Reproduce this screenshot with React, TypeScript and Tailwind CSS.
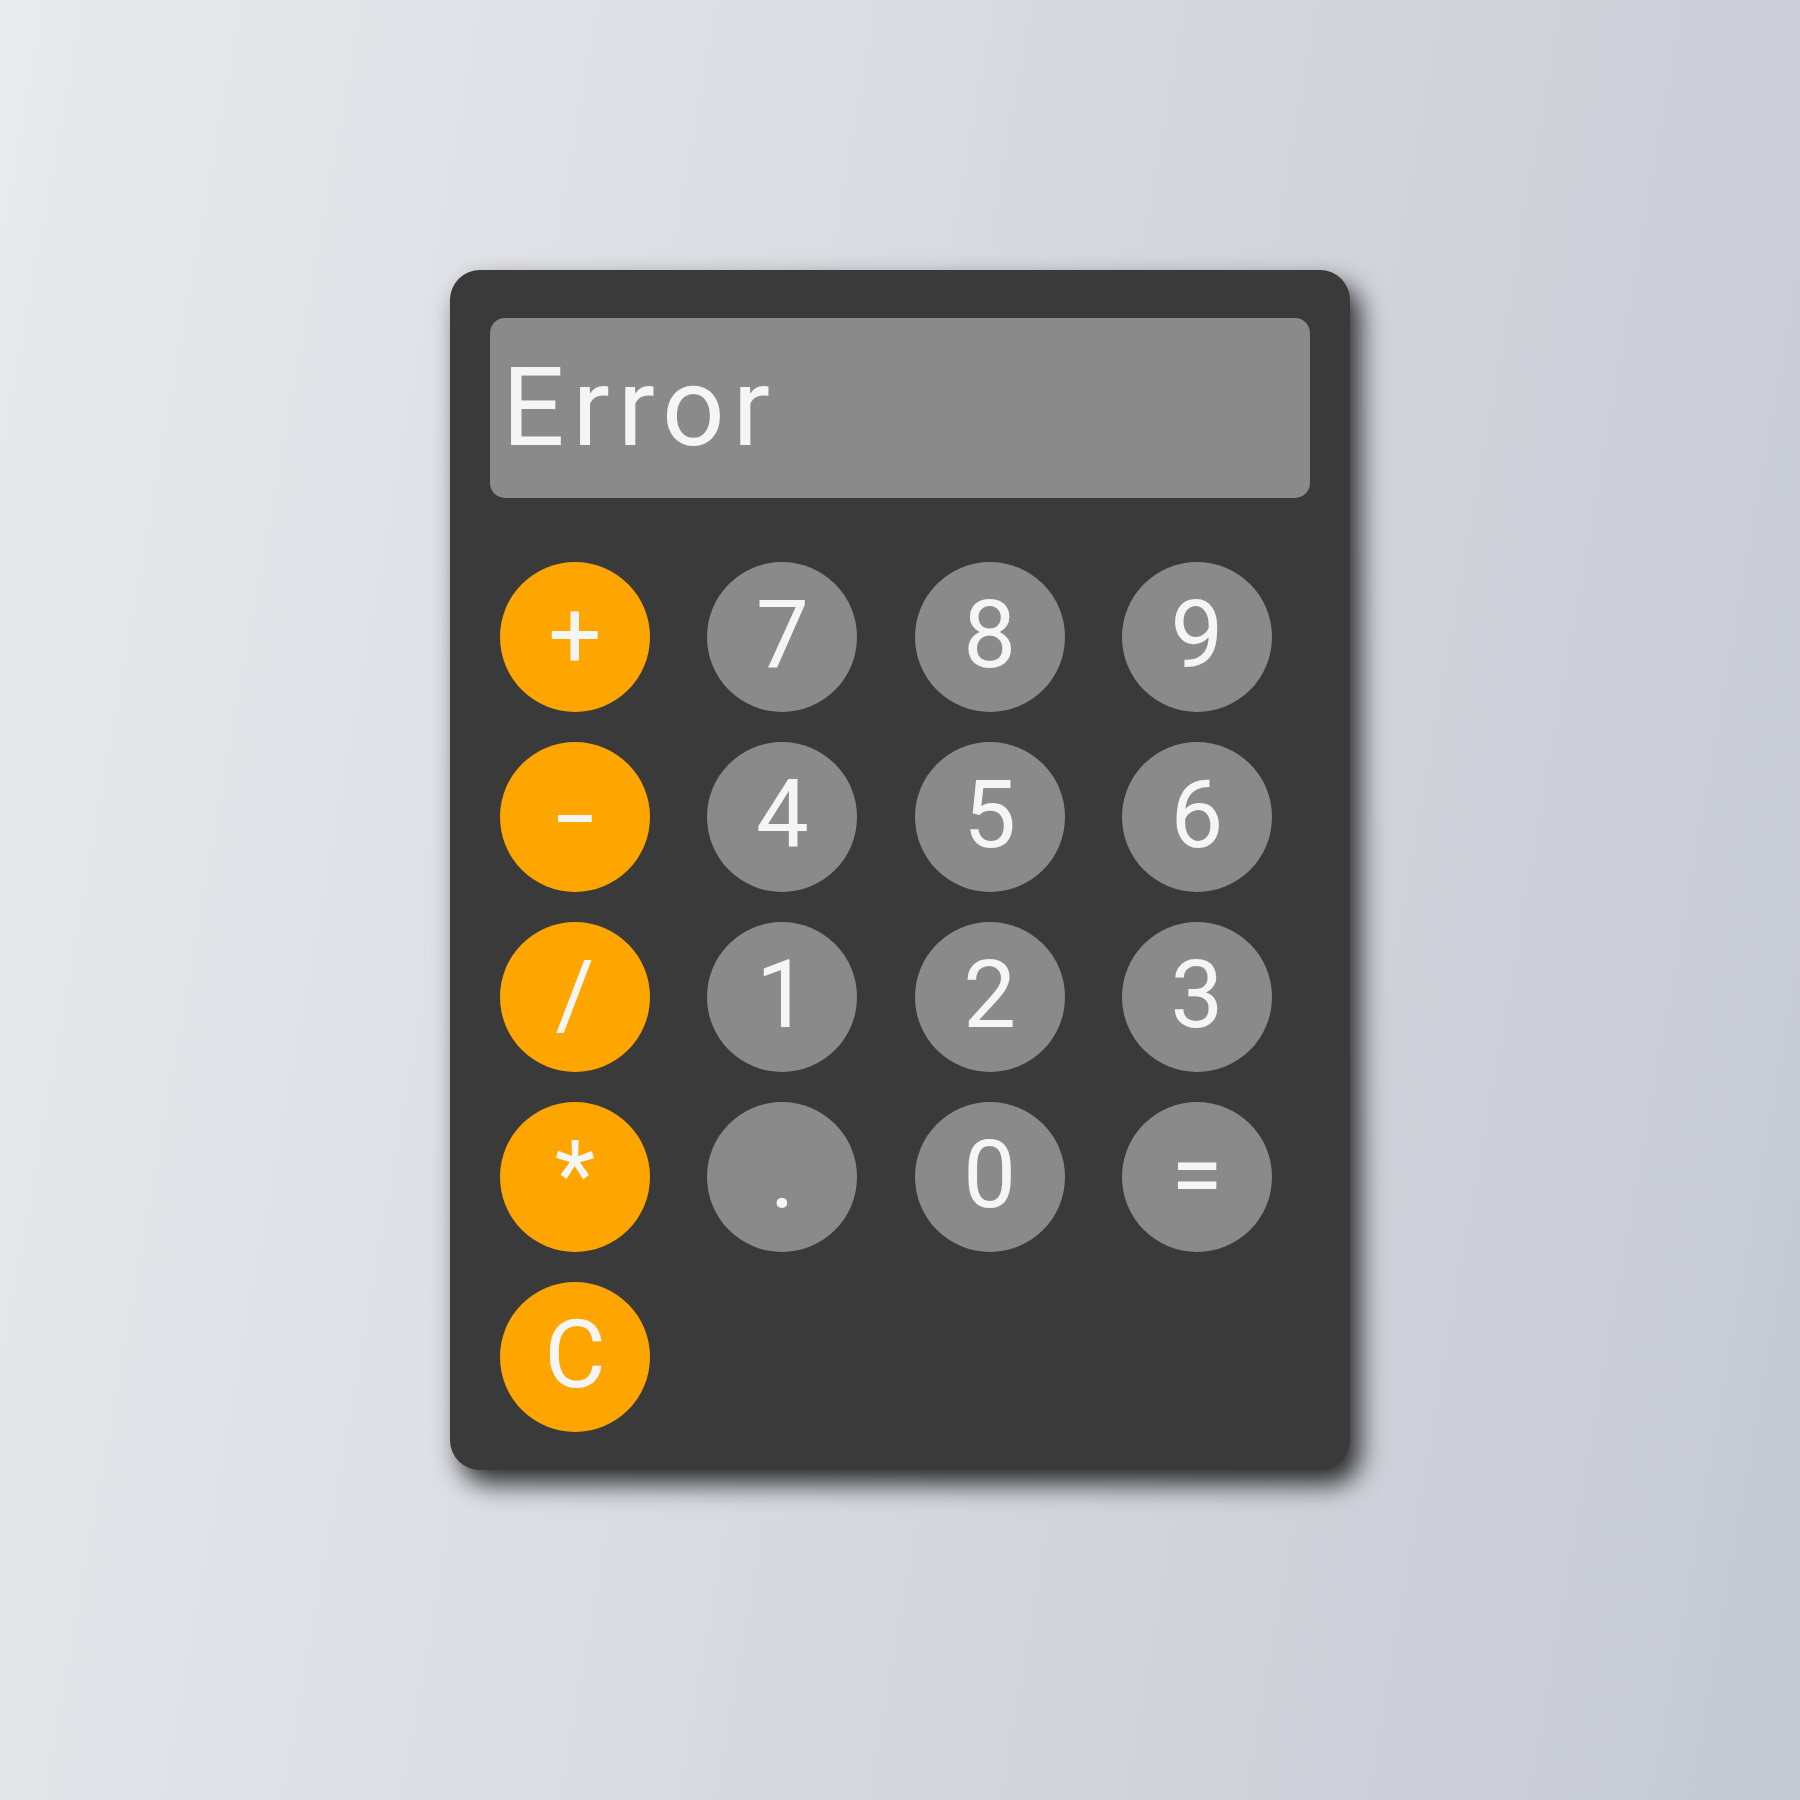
import React from "react";

type Btn = { label: string; op?: boolean };

const rows: Btn[] = [
  { label: "+", op: true },
  { label: "7" },
  { label: "8" },
  { label: "9" },
  { label: "-", op: true },
  { label: "4" },
  { label: "5" },
  { label: "6" },
  { label: "/", op: true },
  { label: "1" },
  { label: "2" },
  { label: "3" },
  { label: "*", op: true },
  { label: "." },
  { label: "0" },
  { label: "=" },
  { label: "C", op: true },
];

export default function App() {
  return (
    <div className="min-h-[1800px] w-full bg-[linear-gradient(100deg,#e9eaed_0%,#d8dbe1_45%,#c5c9d2_100%)] pt-[270px] font-['Roboto',sans-serif]">
      <div className="mx-auto w-[900px] h-[1200px] rounded-[30px] bg-[#3a3a3a] shadow-[10px_14px_26px_rgba(0,0,0,0.8)] pt-[48px]">
        <div className="mx-[40px] h-[180px] rounded-[15px] bg-[#8a8a8a] flex items-center pl-[12px]">
          <span className="text-[110px] leading-none text-[#f5f5f5] font-normal tracking-[8px]">Error</span>
        </div>
        <div className="mt-[64px] ml-[50px] grid grid-cols-[repeat(4,150px)] gap-x-[57.3px] gap-y-[30px]">
          {rows.map((b) => (
            <button
              key={b.label}
              className={
                "w-[150px] h-[150px] rounded-full flex items-center justify-center text-[#f5f5f5] text-[94px] leading-none font-normal " +
                (b.op ? "bg-[#ffa500]" : "bg-[#8a8a8a]")
              }
            >
              <span className={b.label === "-" ? "-mt-[4px] scale-x-150" : "-mt-[4px]"}>{b.label}</span>
            </button>
          ))}
        </div>
      </div>
    </div>
  );
}
